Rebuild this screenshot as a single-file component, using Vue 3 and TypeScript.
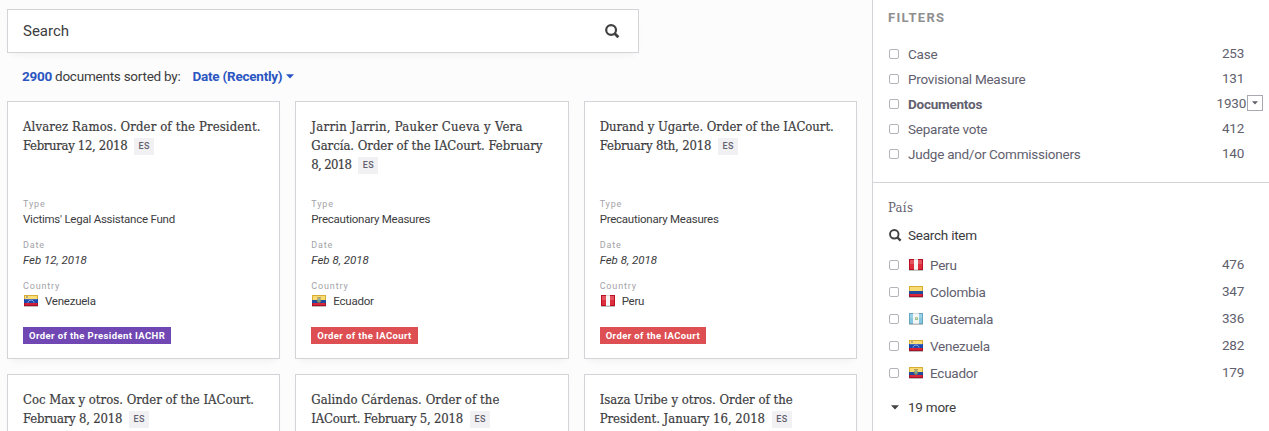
<script setup lang="ts">
import { defineComponent, h } from 'vue'

interface Line {
  text: string
  spacing: number
}

interface Card {
  lines: Line[]
  type: string
  date: string
  country: string
  tag: string
  tone: string
}

interface Filter {
  label: string
  count: number
  bold?: boolean
}

const line = (text: string, spacing: number): Line => ({ text, spacing })

const cards: Card[] = [
  { lines: [line('Alvarez Ramos. Order of the President.', 0.12), line('Februray 12, 2018', -0.33)], type: "Victims' Legal Assistance Fund", date: 'Feb 12, 2018', country: 'Venezuela', tag: 'Order of the President IACHR', tone: 'purple' },
  { lines: [line('Jarrin Jarrin, Pauker Cueva y Vera', 0.27), line('García. Order of the IACourt. February', -0.02), line('8, 2018', -0.65)], type: 'Precautionary Measures', date: 'Feb 8, 2018', country: 'Ecuador', tag: 'Order of the IACourt', tone: 'red' },
  { lines: [line('Durand y Ugarte. Order of the IACourt.', -0.02), line('February 8th, 2018', -0.17)], type: 'Precautionary Measures', date: 'Feb 8, 2018', country: 'Peru', tag: 'Order of the IACourt', tone: 'red' },
  { lines: [line('Coc Max y otros. Order of the IACourt.', 0), line('February 8, 2018', -0.2)], type: '', date: '', country: '', tag: '', tone: '' },
  { lines: [line('Galindo Cárdenas. Order of the', 0.05), line('IACourt. February 5, 2018', -0.2)], type: '', date: '', country: '', tag: '', tone: '' },
  { lines: [line('Isaza Uribe y otros. Order of the', 0), line('President. January 16, 2018', -0.02)], type: '', date: '', country: '', tag: '', tone: '' },
]

const filters: Filter[] = [
  { label: 'Case', count: 253 },
  { label: 'Provisional Measure', count: 131 },
  { label: 'Documentos', count: 1930, bold: true },
  { label: 'Separate vote', count: 412 },
  { label: 'Judge and/or Commissioners', count: 140 },
]

const countries: Filter[] = [
  { label: 'Peru', count: 476 },
  { label: 'Colombia', count: 347 },
  { label: 'Guatemala', count: 336 },
  { label: 'Venezuela', count: 282 },
  { label: 'Ecuador', count: 179 },
]

const rect = (x: number, y: number, width: number, height: number, fill: string) =>
  h('rect', { x, y, width, height, fill })

const Flag = defineComponent({
  props: { name: { type: String, required: true } },
  setup(props) {
    return () => {
      const parts = []
      if (props.name === 'Peru') {
        parts.push(
          rect(0, 0, 14, 11, '#b80f22'),
          rect(1, 1, 12, 9, '#de2e3d'),
          rect(5, 0, 4, 11, '#dcd8d8'),
          rect(5, 1, 4, 9, '#f6f4f4'),
        )
      } else if (props.name === 'Guatemala') {
        parts.push(
          rect(0, 0, 14, 11, '#66a6c0'),
          rect(1, 1, 12, 9, '#86c7e0'),
          rect(4, 0, 6, 11, '#d5dbdc'),
          rect(4, 1, 6, 9, '#f3f5f4'),
          rect(6, 4, 3, 3, '#9fc08f'),
          rect(7, 5, 1, 1, '#e5e3b8'),
        )
      } else if (props.name === 'Venezuela') {
        parts.push(
          rect(0, 0, 14, 4, '#d9ac35'), rect(1, 1, 12, 3, '#f8d65a'), rect(0, 4, 14, 4, '#1c49ae'),
          rect(0, 8, 14, 3, '#a81228'), rect(1, 8, 12, 2, '#d2203a'),
          rect(2, 1, 2, 2, '#a69a70'),
          h('path', { d: 'M4 7.5Q4.5 5.3 7 5.2Q9.5 5.3 10 7.5', fill: 'none', stroke: '#c6d3ee', 'stroke-width': 1, 'stroke-dasharray': '1.2 .5' }),
        )
      } else {
        parts.push(
          rect(0, 0, 14, 5, '#d9ac35'), rect(1, 1, 12, 4, '#f8d455'), rect(0, 5, 14, 3, '#1f4c9c'),
          rect(0, 8, 14, 3, '#a81228'), rect(1, 8, 12, 2, '#d8263a'),
        )
        if (props.name === 'Ecuador') {
          parts.push(
            h('ellipse', { cx: 7, cy: 5.2, rx: 1.7, ry: 2.2, fill: '#6fa394', stroke: '#a18a40', 'stroke-width': 0.8 }),
            rect(5, 2, 4, 1, '#a98f45'),
          )
        }
      }
      parts.push(rect(1, 1, 12, 4, 'rgba(255,255,255,.18)'))
      return h('svg', { width: 14, height: 11, viewBox: '0 0 14 11' }, parts)
    }
  },
})
</script>

<template>
  <div class="page">
    <main class="results">
      <div class="search">
        <span>Search</span>
        <svg class="search-icon" width="15" height="15" viewBox="0 0 15 15">
          <circle cx="6.1" cy="6" r="4.9" />
          <path d="M9.6 9.5L13.4 13.3" />
        </svg>
      </div>
      <div class="sort">
        <b class="total">2900</b>
        <span class="sorted">documents sorted by:</span>
        <b class="order">Date (Recently)</b>
        <svg width="8" height="5" viewBox="0 0 8 5"><path d="M0 .3H8L4 4.6Z" fill="#2b56c1" /></svg>
      </div>
      <div class="grid">
        <article v-for="card in cards" :key="card.lines[0].text" class="card">
          <h2 class="title">
            <span v-for="(l, i) in card.lines" :key="l.text" class="line">
              <span :style="{ letterSpacing: l.spacing + 'px' }">{{ l.text }}</span>
              <span v-if="i === card.lines.length - 1" class="lang">ES</span>
            </span>
          </h2>
          <template v-if="card.type">
            <dl class="meta">
              <dt>Type</dt>
              <dd>{{ card.type }}</dd>
              <dt>Date</dt>
              <dd class="date">{{ card.date }}</dd>
              <dt>Country</dt>
              <dd class="country"><Flag :name="card.country" class="flag" />{{ card.country }}</dd>
            </dl>
            <span class="tag" :class="card.tone">{{ card.tag }}</span>
          </template>
        </article>
      </div>
    </main>

    <aside class="sidebar">
      <section class="types">
        <h3>FILTERS</h3>
        <div v-for="f in filters" :key="f.label" class="row">
          <i class="box"></i>
          <span class="label" :class="{ bold: f.bold }">{{ f.label }}</span>
          <span class="count">{{ f.count }}</span>
          <span v-if="f.bold" class="toggle">
            <svg width="6" height="4" viewBox="0 0 6 4"><path d="M0 .2H6L3 3.6Z" fill="#62606e" /></svg>
          </span>
        </div>
      </section>
      <section class="places">
        <h4>País</h4>
        <div class="find">
          <svg class="search-icon small" width="13" height="13" viewBox="0 0 15 15">
            <circle cx="6.1" cy="6" r="4.9" />
            <path d="M9.6 9.5L13.4 13.3" />
          </svg>
          <span>Search item</span>
        </div>
        <div v-for="c in countries" :key="c.label" class="row place">
          <i class="box"></i>
          <Flag :name="c.label" class="flag" />
          <span class="label">{{ c.label }}</span>
          <span class="count">{{ c.count }}</span>
        </div>
        <div class="more">
          <svg width="8" height="5" viewBox="0 0 8 5"><path d="M0 .3H8L4 4.6Z" fill="#444" /></svg>
          <span>19 more</span>
        </div>
      </section>
    </aside>
  </div>
</template>

<style>
body {
  overflow: hidden;
}
</style>

<style scoped>
.page {
  display: flex;
  height: 431px;
  overflow: hidden;
  background: #fcfcfc;
  color: #3c3c3e;
  font-family: Roboto, sans-serif;
  font-size: 13.5px;
  letter-spacing: -0.24px;
  white-space: nowrap;
}
.page * {
  box-sizing: border-box;
}
.results {
  flex: none;
  width: 872px;
  padding: 9px 15px 0 7px;
}
.search {
  display: flex;
  align-items: center;
  justify-content: space-between;
  width: 632px;
  height: 44px;
  padding: 0 18px 0 15px;
  border: 1px solid #d4d4d8;
  background: #fff;
  box-shadow: 0 5px 8px -4px rgba(0, 0, 0, 0.06);
  font-size: 15px;
  letter-spacing: 0;
}
.search-icon {
  flex: none;
  fill: none;
  stroke: #424244;
  stroke-width: 2.2;
}
.search-icon path {
  stroke-width: 2.8;
}
.small {
  margin-top: 2px;
}
.sort {
  display: flex;
  align-items: center;
  height: 48px;
  padding: 0 0 2px 15px;
}
.total,
.order {
  color: #2b56c1;
  font-weight: 700;
}
.sorted {
  margin: 0 12px 0 3px;
}
.order {
  margin-right: 4px;
}
.grid {
  display: grid;
  grid-template-columns: repeat(3, minmax(0, 1fr));
  grid-auto-rows: 258px;
  gap: 15px;
}
.card {
  padding: 15px;
  border: 1px solid #d4d4d8;
  background: #fff;
  box-shadow: 0 5px 8px -4px rgba(0, 0, 0, 0.06);
}
.title {
  height: 77px;
  margin: 0;
  font-family: 'Roboto Slab', 'DejaVu Serif Condensed', 'DejaVu Serif', serif;
  font-size: 13px;
  font-weight: 400;
  font-stretch: condensed;
  -webkit-text-stroke: 0.2px #3c3c3e;
}
.line {
  display: flex;
  align-items: center;
  height: 19px;
}
.lang {
  width: 20px;
  height: 17px;
  margin: 2px 0 0 7px;
  background: #f1f1f4;
  color: #62606e;
  font: 500 9px/17px Roboto, sans-serif;
  letter-spacing: 0.4px;
  text-align: center;
  -webkit-text-stroke: 0;
}
.meta {
  margin: 0 0 17px;
}
.meta dt {
  height: 14px;
  margin-top: 11px;
  color: #a3a3a8;
  font-size: 9px;
  line-height: 14px;
  letter-spacing: 0.85px;
}
.meta dt:first-child {
  margin-top: 3px;
}
.meta dd {
  height: 16px;
  margin: 0;
  font-size: 11.5px;
  line-height: 16px;
}
.meta .date {
  font-style: italic;
  letter-spacing: 0;
}
.country {
  display: flex;
  align-items: center;
}
.flag {
  flex: none;
  margin: 0 7px 0 1px;
  filter: drop-shadow(0 1px 0.5px rgba(0, 0, 0, 0.25));
}
.country .flag {
  margin-top: -1px;
}
.tag {
  display: inline-block;
  height: 17px;
  padding: 0 6px;
  color: #fff;
  font-size: 9.5px;
  font-weight: 700;
  line-height: 17px;
  letter-spacing: 0.4px;
}
.purple {
  background: #7047b3;
}
.red {
  background: #dd4f53;
}
.sidebar {
  flex: 1;
  border-left: 1px solid #d4d4d8;
  background: #fff;
  color: #62606e;
}
.types {
  height: 183px;
  padding: 9px 25px 0 15px;
  border-bottom: 1px solid #d4d4d8;
}
h3 {
  height: 32px;
  margin: 0;
  color: #8f8f8f;
  font-size: 13px;
  font-weight: 700;
  line-height: 17px;
  letter-spacing: 1.3px;
}
.row {
  position: relative;
  display: flex;
  align-items: center;
  height: 25px;
}
.box {
  flex: none;
  width: 10px;
  height: 10px;
  margin: 0 9px 0 1px;
  border: 1px solid #b3b3ba;
  border-radius: 2px;
}
.bold {
  font-weight: 700;
}
.count {
  margin: -1px 0 0 auto;
}
.bold + .count {
  margin-right: -2px;
}
.toggle {
  position: absolute;
  top: 4px;
  right: -19px;
  display: flex;
  align-items: center;
  justify-content: center;
  width: 16px;
  height: 16px;
  border: 1px solid #a9a9b2;
}
.places {
  padding: 15px 25px 0 15px;
}
h4 {
  height: 20px;
  margin: 0;
  font-family: 'Roboto Slab', 'DejaVu Serif Condensed', 'DejaVu Serif', serif;
  font-size: 13px;
  font-weight: 300;
  font-stretch: condensed;
  line-height: 20px;
  letter-spacing: 0.3px;
}
.find {
  display: flex;
  align-items: center;
  gap: 6px;
  height: 33px;
  padding-left: 1px;
  color: #3c3c3e;
}
.place {
  height: 27px;
}
.more {
  display: flex;
  align-items: center;
  gap: 9px;
  height: 42px;
  padding-left: 3px;
  color: #3c3c3e;
}
</style>
